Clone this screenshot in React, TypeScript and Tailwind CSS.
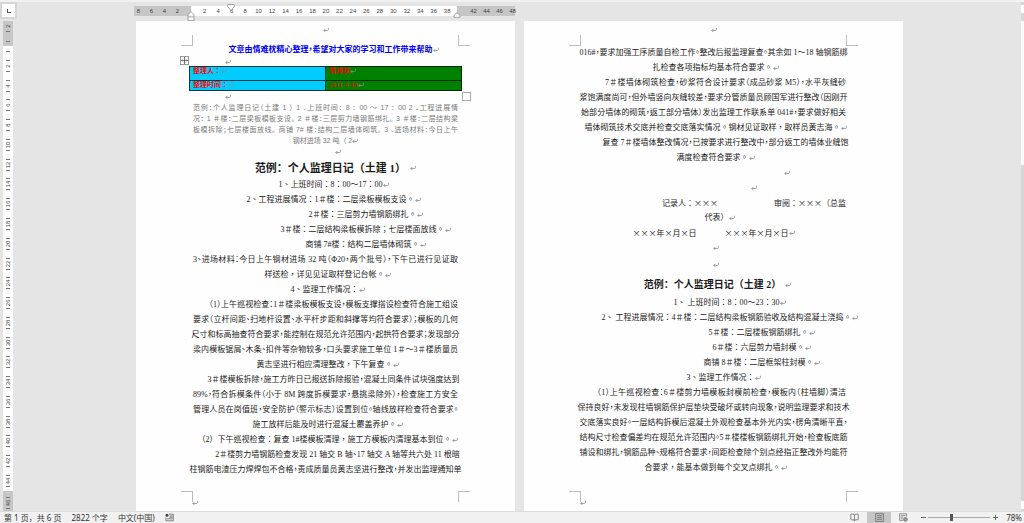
import React from "react";
import { BookOpen } from "lucide-react";

const SONG = "font-['Liberation_Serif','Noto_Sans_CJK_TC',serif]";
const HEI = "font-['Liberation_Sans','Noto_Sans_CJK_SC',sans-serif]";

type Line = { text: string; kind: "full" | "center"; indent?: string; mark?: boolean };

const full = (text: string, indent = ""): Line => ({ text, kind: "full", indent });
const center = (text: string, indent = ""): Line => ({ text, kind: "center", indent, mark: true });

const firstDiary: Line[] = [
  center("1、上班时间：8：00～17：00", "pl-4"),
  center("2、工程进展情况：1＃楼：二层梁板模板支设。", "pl-4"),
  center("2＃楼：三层剪力墙钢筋绑扎。", "pl-20"),
  center("3＃楼：二层结构梁板模拆除；七层楼面放线。", "pl-20"),
  center("商铺 7#楼：结构二层墙体砌筑。", "pl-20"),
  full("3、进场材料：今日上午钢材进场 32 吨（Φ20，两个批号），下午已进行见证取"),
  center("样送检，详见见证取样登记台帐。", "pl-1"),
  center("4、监理工作情况：", "pl-1"),
  full("（1）上午巡视检查：1＃楼梁板模板支设，模板支撑搭设检查符合施工组设", "pl-4"),
  full("要求（立杆间距、扫地杆设置、水平杆步距和斜撑等均符合要求）；模板的几何"),
  full("尺寸和标高抽查符合要求，能控制在规范允许范围内，起拱符合要求；发现部分"),
  full("梁内模板锯屑、木条、扣件等杂物较多，口头要求施工单位 1＃～3＃楼质量员"),
  center("黄志坚进行相应清理整改，下午复查。", "pl-1"),
  full("3＃楼模板拆除，施工方昨日已报送拆除报验，混凝土同条件试块强度达到", "pl-4"),
  full("89%，符合拆模条件（小于 8M 跨度拆模要求，悬挑梁除外），检查施工方安全"),
  full("管理人员在岗值班，安全防护（警示标志）设置到位。轴线放样检查符合要求。"),
  center("施工放样后能及时进行混凝土覆盖养护。", "pl-1"),
  center("（2）下午巡视检查：复查 1#楼模板清理，施工方模板内清理基本到位。", "pl-1"),
  full("2＃楼剪力墙钢筋检查发现 21 轴交 B 轴、17 轴交 A 轴等共六处 11 根暗", "pl-6"),
  full("柱钢筋电渣压力焊焊包不合格，责成质量员黄志坚进行整改，并发出监理通知单"),
];

const firstDiaryEnd: Line[] = [
  full("016#，要求加强工序质量自检工作。整改后报监理复查。其余如 1～18 轴钢筋绑"),
  center("扎检查各项指标均基本符合要求。", "pl-1"),
  full("7＃楼墙体砌筑检查，砂浆符合设计要求（成品砂浆 M5），水平灰缝砂", "pl-6"),
  full("浆饱满度尚可，但外墙竖向灰缝较差，要求分管质量员顾国军进行整改（因刚开"),
  full("始部分墙体的砌筑，返工部分墙体）发出监理工作联系单 041#，要求做好相关"),
  center("墙体砌筑技术交底并检查交底落实情况。钢材见证取样，取样员黄志海。", "pl-1"),
  full("复查 7＃楼墙体整改情况，已按要求进行整改中，部分返工的墙体业缝饱", "pl-6"),
  center("满度检查符合要求。", "pl-1"),
];

const secondDiary: Line[] = [
  center("1、 上班时间：8：00～23：30", "pl-8"),
  center("2、 工程进展情况：4＃楼：二层结构梁板钢筋验收及结构混凝土浇捣。", "pl-8"),
  center("5＃楼：二层楼板钢筋绑扎。", "pl-24"),
  center("6＃楼：六层剪力墙封模。", "pl-24"),
  center("商铺 8＃楼：二层框架柱封模。", "pl-24"),
  center("3、监理工作情况：", "pl-5"),
  full("（1）上午巡视检查：6＃楼剪力墙模板封模前检查，模板内（柱墙脚）清洁", "pl-4"),
  full("保持良好，未发现柱墙钢筋保护层垫块受破坏或转向现象，说明监理要求和技术"),
  full("交底落实良好。一层结构拆模后混凝土外观检查基本外光内实，楞角清晰平直，"),
  full("结构尺寸检查偏差均在规范允许范围内。5＃楼楼板钢筋绑扎开始，检查板底筋"),
  full("铺设和绑扎，钢筋品种、规格符合要求，间距检查除个别点经指正整改外均能符"),
  center("合要求，能基本做到每个交叉点绑扎。", "pl-1"),
];

const summary = [
  "范例：个人监理日记（土建 1 ） 1 ．上班时间： 8 ： 00 ～ 17 ： 00 2 ．工程进展情",
  "况： 1 ＃楼：二层梁板模板支设。 2 ＃楼：三层剪力墙钢筋绑扎。 3 ＃楼：二层结构梁",
  "板模拆除；七层楼面放线。 商铺 7# 楼：结构二层墙体砌筑。 3 ．进场材料：今日上午",
];

function Mark() {
  return (
    <svg viewBox="0 0 6 6" className="inline-block h-[6px] w-[6px] shrink-0" fill="none" stroke="#8c8c8c" strokeWidth="0.8" aria-hidden="true">
      <path d="M5.4 0.8v1.7q0 1-1 1H0.8M2.4 1.9L0.8 3.5L2.4 5.1" />
    </svg>
  );
}

function TextLine({ line }: { line: Line }) {
  if (line.kind === "full") {
    return (
      <div className={`flex h-[15px] justify-center ${line.indent}`}>
        <p className="min-w-full shrink-0 text-justify whitespace-nowrap [font-feature-settings:'halt'] [text-align-last:justify]">{line.text}</p>
      </div>
    );
  }
  return (
    <div className={`flex h-[15px] items-center justify-center ${line.indent}`}>
      <p className="shrink-0 whitespace-nowrap">{line.text}</p>
      <Mark />
    </div>
  );
}

function Lines({ lines }: { lines: Line[] }) {
  return (
    <div className="text-[8px] leading-[15px] text-[#1c1c1c]">
      {lines.map((line) => (
        <TextLine key={line.text} line={line} />
      ))}
    </div>
  );
}

function Page({ children }: { children: React.ReactNode }) {
  const corner = "absolute h-[11px] w-3 border-[#bdbdbd]";
  return (
    <article className={`relative bg-[#fefefe] px-[57px] pb-8 ${SONG}`}>
      <span className={`${corner} top-[14px] left-[45px] border-r border-b`} />
      <span className={`${corner} top-[14px] right-[45px] border-b border-l`} />
      <span className={`${corner} bottom-[9px] left-[45px] border-t border-r`} />
      <span className={`${corner} right-[45px] bottom-[9px] border-t border-l`} />
      <span className="absolute bottom-[5px] left-[56px] flex">
        <Mark />
      </span>
      <header className="flex h-[18px] items-center justify-center">
        <Mark />
      </header>
      {children}
    </article>
  );
}

function HorizontalRuler() {
  const evens = Array.from({ length: 19 }, (_, i) => (i + 1) * 2);
  return (
    <div className="relative -ml-0.5 flex h-[10px] w-[381px] text-[6px] leading-[10px] text-[#444] font-['Liberation_Sans',sans-serif]">
      <div className="flex w-[57px] justify-end bg-[#c6c6c6] pr-[7px]">
        {[8, 6, 4, 2].map((n) => (
          <span key={n} className="w-[13px] shrink-0 text-center">{n}</span>
        ))}
      </div>
      <div className="flex flex-1 bg-white pr-[3px] pl-[7px]">
        {evens.map((n) => (
          <span key={n} className="flex-1 text-center">{n}</span>
        ))}
      </div>
      <div className="flex w-[58px] bg-[#c6c6c6] pl-[10px]">
        {[42, 44, 46, 48].map((n) => (
          <span key={n} className="w-[13px] shrink-0 text-center">{n}</span>
        ))}
      </div>
      <svg viewBox="0 0 8 8" className="absolute -top-[2px] left-[93px] h-2 w-2" fill="#fff" stroke="#999" strokeWidth="0.9" aria-hidden="true">
        <path d="M0.8 0.6h6.4v2.2L4 6.4L0.8 2.8z" />
      </svg>
      <svg viewBox="0 0 8 10" className="absolute top-[5px] left-[53px] h-[10px] w-2" fill="#fff" stroke="#999" strokeWidth="0.9" aria-hidden="true">
        <path d="M4 0.7L7 3.6v5.8H1V3.6zM1 5.9h6" />
      </svg>
      <svg viewBox="0 0 8 6" className="absolute top-[6px] right-[54px] h-[6px] w-2" fill="#fff" stroke="#999" strokeWidth="0.9" aria-hidden="true">
        <path d="M4 0.7L7 3.3v2.1H1V3.3z" />
      </svg>
    </div>
  );
}

function Tick() {
  return <span className="h-px w-1 shrink-0 bg-[#777]" />;
}

function RulerNumber({ n }: { n: number }) {
  return (
    <div className="flex min-h-0 flex-1 flex-col items-center justify-center gap-px">
      <Tick />
      <span className="flex h-2 w-[10px] items-center justify-center">
        <span className="-rotate-90">{n}</span>
      </span>
      <Tick />
    </div>
  );
}

function VerticalRuler() {
  const evens = Array.from({ length: 22 }, (_, i) => (i + 1) * 2);
  return (
    <div className="ml-[3px] flex w-[10px] flex-1 flex-col text-[6px] leading-[8px] text-[#444] font-['Liberation_Sans',sans-serif]">
      <div className="flex h-[25px] flex-col items-center gap-[1px] bg-[#c6c6c6] pt-[1px]">
        <span className="flex h-2 items-center">
          <span className="-rotate-90">2</span>
        </span>
        <Tick />
        <span className="h-[7px]" />
        <Tick />
      </div>
      <div className="flex flex-1 flex-col bg-white">
        <div className="flex h-[10px] shrink-0 items-center justify-center">
          <Tick />
        </div>
        {evens.map((n) => (
          <RulerNumber key={n} n={n} />
        ))}
      </div>
      <div className="flex h-5 flex-col bg-[#c6c6c6] pt-1">
        <RulerNumber n={46} />
      </div>
    </div>
  );
}

function FirstPage() {
  return (
    <Page>
      <h1 className="mt-[3px] flex h-[15px] items-center justify-center pl-4 text-[8px] leading-[15px] font-bold whitespace-nowrap text-[#0000f0]">
        <span className="shrink-0 [font-feature-settings:'halt']">文章由情难枕精心整理，希望对大家的学习和工作带来帮助</span>
        <Mark />
      </h1>
      <div className="flex h-[9px] items-center pl-8">
        <Mark />
      </div>
      <div className="relative -mx-1">
        <table className="w-full border-collapse text-[7px] leading-[9px] font-bold text-[#f01010]">
          <tbody>
            <tr className="h-[14px] align-top">
              <td className="w-1/2 border border-[#063a3a] bg-[#00ccff] pl-[3px]">整理人：<Mark /></td>
              <td className="w-1/2 border border-[#032803] bg-[#008000] pl-[3px] text-[#d01800]">情难枕<Mark /></td>
            </tr>
            <tr className="h-[10px] align-top">
              <td className="border border-[#063a3a] bg-[#00ccff] pl-[3px]">整理时间：<Mark /></td>
              <td className="border border-[#032803] bg-[#008000] pl-[3px] text-[#d01800]">2011-4-18<Mark /></td>
            </tr>
          </tbody>
        </table>
        <button aria-label="移动表格" className="absolute -top-[10px] -left-[9px] h-[9px] w-[9px] border border-[#999] bg-white">
          <svg viewBox="0 0 7 7" className="h-[7px] w-[7px]" fill="none" stroke="#444" strokeWidth="0.7" aria-hidden="true">
            <path d="M3.5 0.4v6.2M0.4 3.5h6.2M2.6 1.3L3.5 0.4l0.9 0.9M2.6 5.7l0.9 0.9l0.9-0.9M1.3 2.6L0.4 3.5l0.9 0.9M5.7 2.6l0.9 0.9l-0.9 0.9" />
          </svg>
        </button>
        <button aria-label="调整表格大小" className="absolute -right-[9px] -bottom-[10px] h-[9px] w-[9px] border border-[#aaa] bg-white" />
      </div>
      <div className="flex h-[11px] items-center pl-8">
        <Mark />
      </div>
      <div className={`text-[7px] leading-[11px] text-[#7a7a7a] ${HEI}`}>
        {summary.map((text) => (
          <div key={text} className="flex h-[11px] justify-center">
            <p className="min-w-full shrink-0 text-justify whitespace-nowrap [font-feature-settings:'halt'] [text-align-last:justify]">{text}</p>
          </div>
        ))}
        <div className="flex h-[11px] items-center justify-center">
          <p className="whitespace-nowrap">钢材进场 32 吨（ 2</p>
          <Mark />
        </div>
      </div>
      <div className="flex h-3 items-center justify-center pl-6">
        <Mark />
      </div>
      <h2 className="flex h-[19px] items-center justify-center gap-1 pl-5 text-[11px] leading-5 font-bold text-[#1c1c1c] font-['Liberation_Serif','Noto_Sans_CJK_SC',serif]">
        <span className="shrink-0 whitespace-nowrap">范例：个人监理日记（土建 1）</span>
        <Mark />
      </h2>
      <Lines lines={firstDiary} />
    </Page>
  );
}

function SecondPage() {
  return (
    <Page>
      <div className="h-[6px]" />
      <Lines lines={firstDiaryEnd} />
      <div className="text-[8px] leading-[15px] text-[#1c1c1c]">
        <div className="flex h-[15px] items-center justify-end pr-14">
          <Mark />
        </div>
        <div className="flex h-[15px] items-center justify-center pl-20">
          <Mark />
        </div>
        <div className="flex h-[15px] justify-end gap-14 whitespace-nowrap font-['Noto_Sans_CJK_TC',sans-serif] [font-feature-settings:'fwid']">
          <span>记录人：×××</span>
          <span>审阅：×××（总监</span>
        </div>
        <div className="flex h-[15px] items-center justify-center pl-3">
          代表）
          <Mark />
        </div>
        <div className="flex h-[15px] items-center justify-center whitespace-nowrap font-['Noto_Sans_CJK_TC',sans-serif] [font-feature-settings:'fwid']">
          <span className="mr-7">×××年×月×日</span>
          <span>×××年×月×日</span>
          <Mark />
        </div>
        <div className="flex h-[15px] items-center justify-center pl-1">
          <Mark />
        </div>
        <div className="flex h-5 items-center justify-center pl-1">
          <Mark />
        </div>
      </div>
      <h2 className="flex h-5 items-center justify-center gap-1 pl-2 text-[10px] leading-5 font-bold text-[#1c1c1c] font-['Liberation_Serif','Noto_Sans_CJK_SC',serif]">
        <span className="shrink-0 whitespace-nowrap">范例：个人监理日记（土建 2）</span>
        <Mark />
      </h2>
      <Lines lines={secondDiary} />
    </Page>
  );
}

function StatusBar() {
  return (
    <footer className="flex h-3 shrink-0 items-center border-t border-[#dcdcdc] bg-[#f1f1f1] pr-[2px] pl-1 text-[8px] leading-[11px] whitespace-nowrap text-[#333] font-['Noto_Sans','Noto_Sans_CJK_SC',sans-serif]">
      <button className="mr-[10px]">第 1 页，共 6 页</button>
      <button className="mr-[10px]">2822 个字</button>
      <button className="mr-[10px]">中文(中国)</button>
      <button aria-label="宏录制">
        <svg viewBox="0 0 9 9" className="h-[9px] w-[9px]" fill="none" stroke="#666" strokeWidth="0.8" aria-hidden="true">
          <path d="M4 1.2h4.3v6.6H0.9V4.6M4.6 3h3M1.8 5.8h5.6M4.6 4.4h3" />
          <circle cx="2" cy="2.2" r="1.5" fill="#444" stroke="none" />
        </svg>
      </button>
      <div className="ml-auto flex items-center">
        <button aria-label="阅读视图" className="mr-2">
          <BookOpen size={9} color="#666" strokeWidth={2} />
        </button>
        <button aria-label="页面视图" className="mr-2 flex h-[11px] w-6 items-center justify-center bg-[#c6c6c6]">
          <svg viewBox="0 0 9 9" className="h-[9px] w-[9px]" fill="none" stroke="#666" strokeWidth="0.8" aria-hidden="true">
            <path d="M0.6 0.6h7.8v7.8H0.6zM2 2.6h5M2 4.5h5M2 6.4h5" />
          </svg>
        </button>
        <button aria-label="Web 版式视图" className="mr-[10px]">
          <svg viewBox="0 0 9 9" className="h-[9px] w-[9px]" fill="none" stroke="#777" strokeWidth="0.8" aria-hidden="true">
            <path d="M3.8 7.4H0.6V0.8h7v2.8M1.8 2.6h4.6M1.8 4.2h2.4M1.8 5.8h1.6" />
            <circle cx="6.4" cy="6.4" r="1.9" fill="#999" />
          </svg>
        </button>
        <button aria-label="缩小" className="flex h-[9px] w-[10px] items-center justify-center">
          <span className="h-px w-[5px] bg-[#666]" />
        </button>
        <input
          type="range"
          min={0}
          max={100}
          defaultValue={37}
          aria-label="显示比例"
          className="h-[9px] w-[62px] appearance-none bg-transparent [&::-webkit-slider-runnable-track]:h-px [&::-webkit-slider-runnable-track]:bg-[#aaa] [&::-webkit-slider-thumb]:-mt-[3px] [&::-webkit-slider-thumb]:h-[7px] [&::-webkit-slider-thumb]:w-[3px] [&::-webkit-slider-thumb]:appearance-none [&::-webkit-slider-thumb]:bg-[#555]"
        />
        <button aria-label="放大" className="mr-[6px] flex h-[9px] w-[10px] items-center justify-center">
          <svg viewBox="0 0 5 5" className="h-[5px] w-[5px]" stroke="#666" aria-hidden="true">
            <path d="M2.5 0v5M0 2.5h5" />
          </svg>
        </button>
        <button>78%</button>
      </div>
    </footer>
  );
}

export default function App() {
  return (
    <div className="flex min-h-screen flex-col overflow-hidden bg-[#e5e5e5]">
      <div className="h-[2px] bg-[#f1f1f1]" />
      <div className="flex flex-1">
        <aside className="flex w-[18px] flex-col">
          <div className="mb-[2px] flex h-[17px] w-[17px] items-center justify-center bg-[#d6d6d6]">
            <button aria-label="制表符" className="flex h-[13px] w-[13px] items-center justify-center bg-white">
              <span className="h-1 w-1 border-b border-l border-[#555]" />
            </button>
          </div>
          <VerticalRuler />
        </aside>
        <main className="flex flex-1 justify-center">
          <div className="flex w-[767px] flex-col pt-1">
            <HorizontalRuler />
            <div className="mt-[5px] grid flex-1 grid-cols-2 gap-[9px]">
              <FirstPage />
              <SecondPage />
            </div>
          </div>
        </main>
        <div className="flex w-[3px] flex-col bg-[#d6d6d6] pt-[3px] pb-[2px]">
          <button aria-label="向上滚动" className="h-2 w-full bg-white" />
          <div className="mt-2 h-36 bg-[#fafafa]" />
          <button aria-label="向下滚动" className="mt-auto h-2 w-full bg-white" />
        </div>
      </div>
      <StatusBar />
    </div>
  );
}
